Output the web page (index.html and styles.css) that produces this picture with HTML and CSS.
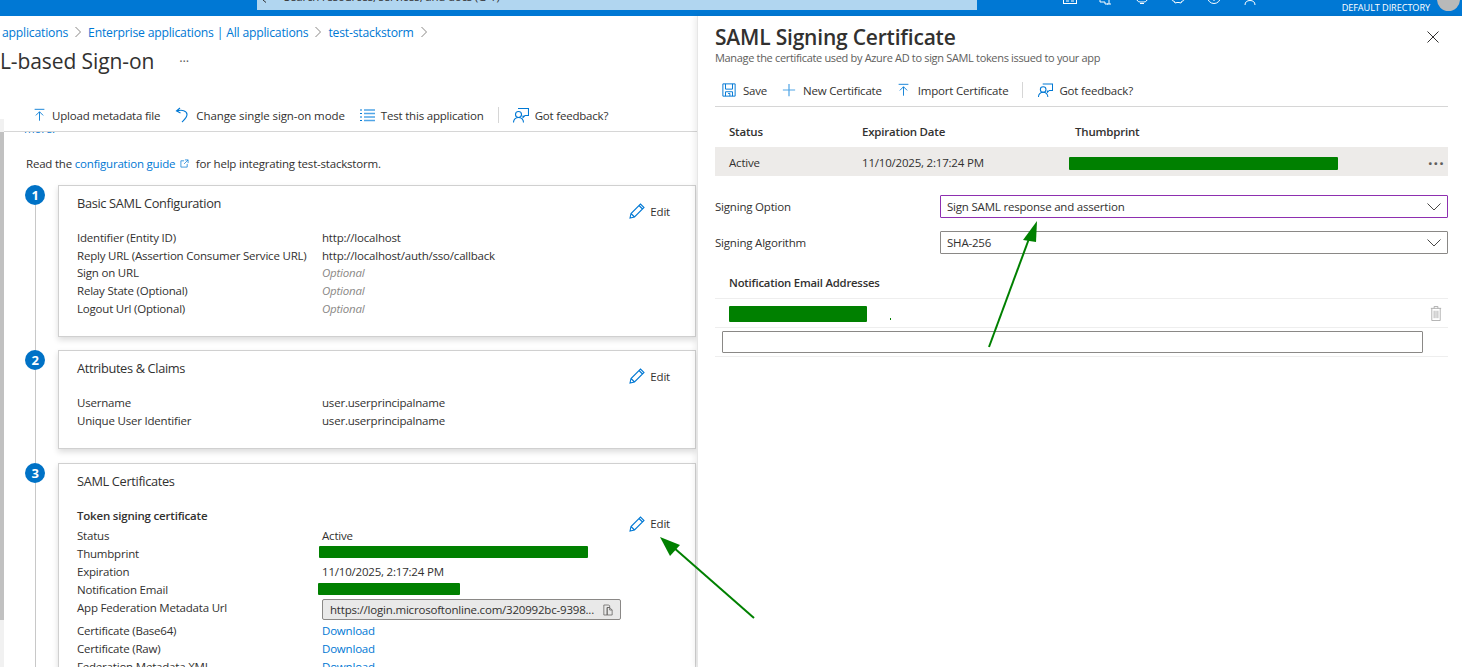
FILE: index.html
```html
<!DOCTYPE html>
<html lang="en">
<head>
    <meta charset="UTF-8">
    <meta name="viewport" content="width=device-width, initial-scale=1.0">
    <title>SAML-based Sign-on</title>

    <link rel="stylesheet" href="styles.css">
</head>
<body>

    <header class="topbar">
        <div class="search">
            <svg class="search-icon" viewBox="0 0 8 4"><path d="M0 0l3 2.500"/></svg>
            <span class="search-text">Search resources, services, and docs (G+/)</span>
        </div>
        <div class="top-icons">
            <svg class="top-icon" viewBox="0 0 14 14"><rect x="0.5" y="-8" width="13" height="11.5"/><path d="M3 1h3M8 1h3"/></svg>
            <svg class="top-icon" viewBox="0 0 14 14"><path d="M1 -3v5h5v2h3M10 -3v7M8 4h4"/></svg>
            <svg class="top-icon" viewBox="0 0 14 14"><path d="M2 0c1 2 2 2 5 2s4 0 5-2M5 3.500h4"/></svg>
            <svg class="top-icon" viewBox="0 0 14 14"><path d="M1 -1c0 2 1 2 2 2l1 2 2-.5h2l2 .5 1-2c1 0 2 0 2-2"/></svg>
            <svg class="top-icon" viewBox="0 0 14 14"><circle cx="7" cy="-3" r="6.500"/><path d="M7 -1v2"/></svg>
            <svg class="top-icon" viewBox="0 0 14 14"><path d="M2 5c0-3 2-4.500 5-4.500s5 1.500 5 4.500"/></svg>
        </div>
        <div class="directory">DEFAULT DIRECTORY</div>
        <div class="avatar"></div>
    </header>

    <main class="page">
        <section class="left">
            <nav class="crumbs">
                <a>applications</a><svg class="crumb-sep" viewBox="0 0 8 12"><path d="M1.500 1l5 5-5 5"/></svg>
                <a>Enterprise applications | All applications</a><svg class="crumb-sep" viewBox="0 0 8 12"><path d="M1.500 1l5 5-5 5"/></svg>
                <a>test-stackstorm</a><svg class="crumb-sep" viewBox="0 0 8 12"><path d="M1.500 1l5 5-5 5"/></svg>
            </nav>
            <div class="page-title">
                <h1>L-based Sign-on</h1>
                <span class="title-more">···</span>
            </div>

            <div class="toolbar left-toolbar">
                <span class="tool">
                    <svg class="icon icon-13" viewBox="0 0 16 16"><path d="M2 1h12M8 15V4M3.500 8.500L8 4l4.500 4.500"/></svg>
                    Upload metadata file
                </span>
                <span class="tool tool-wide">
                    <svg class="icon icon-14" viewBox="0 0 14 16"><path d="M5 1L1.500 4 5.500 6M2 4c4.500-1.500 10-.5 10 3.500 0 3-2.500 5-5 7.500"/></svg>
                    Change single sign-on mode
                </span>
                <span class="tool">
                    <svg class="icon icon-16" viewBox="0 0 16 14"><path d="M5 2h11M5 5.500h11M5 9h11M5 12.500h11" class="light"/><path d="M1 2h2M1 5.500h2M1 9h2M1 12.500h2"/></svg>
                    Test this application
                </span>
                <span class="tool-sep"></span>
                <span class="tool">
                    <svg class="icon icon-16" viewBox="0 0 16 16"><path d="M5 1.500h10.500v7H12l-2 2v-2"/><circle cx="5.500" cy="7.500" r="3"/><path d="M.5 15.500c0-3 2-5 5-5s5 2 5 5"/></svg>
                    Got feedback?
                </span>
            </div>

            <div class="scroll-area">
                <div class="scrollbar"><div class="scroll-thumb"></div></div>
                <div class="content">
                    <a class="more">more.</a>
                    <p class="guide">Read the <a>configuration guide</a>
                        <svg class="ext" viewBox="0 0 10 10"><path d="M8 5.500V9H1V2h3.500M5.500 1H9v3.500M9 1L4.500 5.500"/></svg>
                        for help integrating test-stackstorm.</p>

                    <div class="step step-first">
                        <div class="marker"><span class="num">1</span><span class="rail"></span></div>
                        <div class="card card-basic">
                            <div class="card-head">
                                <h2>Basic SAML Configuration</h2>
                                <span class="edit"><svg class="icon" viewBox="0 0 16 16"><path d="M1 15l1-4.500L11.500 1l3.500 3.500L5.500 14zM2 10.500L5.500 14M10 2.500L13.500 6"/></svg>Edit</span>
                            </div>
                            <dl class="rows">
                                <dt>Identifier (Entity ID)</dt><dd>http://localhost</dd>
                                <dt>Reply URL (Assertion Consumer Service URL)</dt><dd>http://localhost/auth/sso/callback</dd>
                                <dt>Sign on URL</dt><dd class="optional">Optional</dd>
                                <dt>Relay State (Optional)</dt><dd class="optional">Optional</dd>
                                <dt>Logout Url (Optional)</dt><dd class="optional">Optional</dd>
                            </dl>
                        </div>
                    </div>

                    <div class="step">
                        <div class="marker"><span class="num">2</span><span class="rail"></span></div>
                        <div class="card card-claims">
                            <div class="card-head">
                                <h2>Attributes &amp; Claims</h2>
                                <span class="edit"><svg class="icon" viewBox="0 0 16 16"><path d="M1 15l1-4.500L11.500 1l3.500 3.500L5.500 14zM2 10.500L5.500 14M10 2.500L13.500 6"/></svg>Edit</span>
                            </div>
                            <dl class="rows">
                                <dt>Username</dt><dd>user.userprincipalname</dd>
                                <dt>Unique User Identifier</dt><dd>user.userprincipalname</dd>
                            </dl>
                        </div>
                    </div>

                    <div class="step">
                        <div class="marker"><span class="num">3</span><span class="rail"></span></div>
                        <div class="card">
                            <div class="card-head">
                                <h2>SAML Certificates</h2>
                            </div>
                            <div class="cert-head">
                                <strong>Token signing certificate</strong>
                                <span class="edit"><svg class="icon" viewBox="0 0 16 16"><path d="M1 15l1-4.500L11.500 1l3.500 3.500L5.500 14zM2 10.500L5.500 14M10 2.500L13.500 6"/></svg>Edit</span>
                            </div>
                            <dl class="rows">
                                <dt>Status</dt><dd>Active</dd>
                                <dt>Thumbprint</dt><dd><span class="redact redact-thumb"></span></dd>
                                <dt>Expiration</dt><dd>11/10/2025, 2:17:24 PM</dd>
                                <dt>Notification Email</dt><dd><span class="redact redact-mail"></span></dd>
                                <dt>App Federation Metadata Url</dt>
                                <dd class="url-cell">
                                    <span class="url-box">
                                        <span class="url-text">https://login.microsoftonline.com/320992bc-9398...</span>
                                        <svg class="copy" viewBox="0 0 12 14"><path d="M1 1h6l1 1v2H5v9H1zM5 4h3l3 3v6H5zM8 4v3h3"/></svg>
                                    </span>
                                </dd>
                                <dt>Certificate (Base64)</dt><dd><a>Download</a></dd>
                                <dt>Certificate (Raw)</dt><dd><a>Download</a></dd>
                                <dt>Federation Metadata XML</dt><dd><a>Download</a></dd>
                            </dl>
                        </div>
                    </div>
                </div>
            </div>
        </section>

        <aside class="blade">
            <div class="blade-head">
                <div>
                    <h2 class="blade-title">SAML Signing Certificate</h2>
                    <p class="blade-sub">Manage the certificate used by Azure AD to sign SAML tokens issued to your app</p>
                </div>
                <svg class="close" viewBox="0 0 12 12"><path d="M.5.500l11 11M11.500.500l-11 11"/></svg>
            </div>

            <div class="toolbar blade-toolbar">
                <span class="tool tool-save">
                    <svg class="icon icon-14" viewBox="0 0 16 16"><path d="M1 1h14v14H1zM4 1v6h8V1M4 15v-5h8v5M7 12h2v3"/></svg>
                    Save
                </span>
                <span class="tool tool-plus">
                    <svg class="icon icon-14" viewBox="0 0 16 16"><path class="light" d="M8 1v14M1 8h14"/></svg>
                    New Certificate
                </span>
                <span class="tool tool-import">
                    <svg class="icon icon-13" viewBox="0 0 16 16"><path d="M2 1h12M8 15V4M3.500 8.500L8 4l4.500 4.500"/></svg>
                    Import Certificate
                </span>
                <span class="tool-sep"></span>
                <span class="tool">
                    <svg class="icon icon-15" viewBox="0 0 16 16"><path d="M5 1.500h10.500v7H12l-2 2v-2"/><circle cx="5.500" cy="7.500" r="3"/><path d="M.5 15.500c0-3 2-5 5-5s5 2 5 5"/></svg>
                    Got feedback?
                </span>
            </div>

            <div class="cert-table">
                <div class="cert-row cert-row-head">
                    <span>Status</span><span>Expiration Date</span><span>Thumbprint</span>
                </div>
                <div class="cert-row cert-row-active">
                    <span>Active</span><span>11/10/2025, 2:17:24 PM</span>
                    <span><span class="redact redact-blade"></span></span>
                    <span class="row-more">···</span>
                </div>
            </div>

            <div class="field field-first">
                <label>Signing Option</label>
                <div class="select select-focus">Sign SAML response and assertion
                    <svg class="chevron" viewBox="0 0 14 8"><path d="M.5.500L7 7l6.500-6.500"/></svg>
                </div>
            </div>
            <div class="field">
                <label>Signing Algorithm</label>
                <div class="select">SHA-256
                    <svg class="chevron" viewBox="0 0 14 8"><path d="M.5.500L7 7l6.500-6.500"/></svg>
                </div>
            </div>

            <h3 class="mail-head">Notification Email Addresses</h3>
            <div class="mail-row">
                <span class="redact redact-addr"></span>
                <span class="mail-dot"></span>
                <svg class="trash" viewBox="0 0 12 16"><path d="M.5 2.500h11M4 2.500V.500h4v2M1.500 2.500V15.500h9V2.500M4 5v8M6 5v8M8 5v8"/></svg>
            </div>
            <div class="mail-input-row"><div class="mail-input"></div></div>
        </aside>
    </main>

    <!-- annotation arrows drawn on top of the screenshot -->
    <svg class="arrows" viewBox="0 0 1462 667">
        <path d="M754 618L673 547"/>
        <polygon points="660,537 680,545 670,556"/>
        <path d="M989 347L1030 236"/>
        <polygon points="1037,221 1023,240 1036,242"/>
    </svg>

</body>
</html>
```

FILE: styles.css
```css
* {
    box-sizing: border-box;
}

body {
    margin: 0;
    height: 100vh;
    display: flex;
    flex-direction: column;
    overflow: hidden;
    font-family: "Open Sans", "Noto Sans", sans-serif;
    font-size: 11.5px;
    letter-spacing: -0.2px;
    color: #323130;
    background-color: #fff;
}

h1, h2, h3, p, dl, dd {
    margin: 0;
}

a {
    color: #0078d4;
}

/* top bar */
.topbar {
    flex: none;
    height: 16px;
    display: flex;
    padding-left: 257px;
    background-color: #0078d4;
    overflow: hidden;
}

.search {
    width: 720px;
    height: 10px;
    padding-left: 6px;
    display: flex;
    gap: 13px;
    background-color: #b1d6f0;
    overflow: hidden;
}

.search-icon {
    width: 8px;
    height: 4px;
    fill: none;
    stroke: #323130;
}

.search-text {
    display: block;
    margin-top: -3px;
    line-height: 0;
    white-space: nowrap;
    color: #323130;
}

.top-icons {
    display: flex;
    gap: 22px;
    margin-left: 86px;
}

.top-icon {
    width: 14px;
    height: 14px;
    overflow: visible;
    fill: none;
    stroke: #fff;
    stroke-width: 1;
}

.directory {
    margin-left: auto;
    font-size: 9.2px;
    line-height: 15px;
    letter-spacing: -0.1px;
    color: #fff;
}

.avatar {
    width: 23px;
    height: 23px;
    margin: -12px 2px 0 7px;
    border-radius: 50%;
    background-color: #b9b9b9;
}

/* page */
.page {
    flex: 1;
    display: flex;
    min-height: 0;
}

.left {
    width: 697px;
    flex: none;
    display: flex;
    flex-direction: column;
    overflow: hidden;
}

.crumbs {
    height: 20px;
    margin-top: 6px;
    padding-left: 2px;
    display: flex;
    align-items: center;
    font-size: 12.2px;
    white-space: nowrap;
}

.crumb-sep {
    width: 8px;
    height: 12px;
    margin: 0 6px;
    fill: none;
    stroke: #8a8886;
}

.page-title {
    height: 30px;
    margin-top: 4px;
    display: flex;
    align-items: center;
}

.page-title h1 {
    font-size: 21px;
    font-weight: 400;
    letter-spacing: -0.1px;
}

.title-more {
    margin-left: 25px;
    font-size: 13px;
    color: #605e5c;
}

.toolbar {
    display: flex;
    align-items: center;
    border-bottom: 1px solid #d6d6d6;
}

.left-toolbar {
    height: 32px;
    margin-top: 24px;
    padding-left: 33px;
    padding-bottom: 1px;
}

.tool {
    display: flex;
    align-items: center;
    gap: 6px;
    margin-right: 15px;
    white-space: nowrap;
}

.tool-wide {
    gap: 7px;
    margin-right: 14px;
    letter-spacing: -0.09px;
}

.tool-sep {
    width: 1px;
    height: 16px;
    margin: 0 14px 0 -1px;
    background-color: #d6d6d6;
}

.icon {
    width: 16px;
    height: 16px;
    flex: none;
    fill: none;
    stroke: #0078d4;
    stroke-width: 1.1;
}

.icon .light {
    stroke: #50a5e6;
    stroke-width: 1.4;
}

.icon-13 {
    width: 13px;
}

.icon-14 {
    width: 14px;
}

.icon-15 {
    width: 15px;
}

/* scrolling part of the left side */
.scroll-area {
    flex: 1;
    min-height: 0;
    display: flex;
}

.scrollbar {
    width: 4px;
    flex: none;
    margin-top: -13px;
    padding-top: 13px;
    background-color: #f1f1f1;
}

.scroll-thumb {
    height: 488px;
    background-color: #c1c1c1;
}

.content {
    flex: 1;
    padding-left: 21px;
    overflow: hidden;
}

.more {
    display: block;
    height: 3px;
    line-height: 0;
    margin: -3px 0 0 -1px;
}

.guide {
    margin: 23px 0 12px 1px;
    line-height: 18px;
    white-space: nowrap;
}

.ext {
    width: 9px;
    height: 9px;
    margin: 0 4px 0 2px;
    fill: none;
    stroke: #0078d4;
    stroke-width: 0.8;
}

.step {
    display: flex;
    gap: 13px;
    padding-bottom: 14px;
}

.step-first {
    padding-bottom: 13px;
}

.marker {
    width: 20px;
    flex: none;
    display: flex;
    flex-direction: column;
    align-items: center;
}

.num {
    width: 20px;
    height: 20px;
    flex: none;
    border-radius: 50%;
    background-color: #0072c6;
    color: #fff;
    font-size: 13px;
    font-weight: 700;
    line-height: 20px;
    text-align: center;
}

.rail {
    flex: 1;
    width: 1px;
    margin-bottom: -14px;
    background-color: #c8c8c8;
}

.card {
    flex: 1;
    margin-right: 1px;
    border: 1px solid #d0d0d0;
    padding: 0 25px 0 18px;
    background-color: #fff;
    box-shadow: 0 3px 6px rgba(0, 0, 0, 0.14);
}

.card-basic {
    height: 152px;
}

.card-claims {
    height: 99px;
}

.card-head {
    height: 43px;
    padding-top: 7px;
    display: flex;
    justify-content: space-between;
    align-items: flex-start;
}

.card-head h2 {
    font-size: 12.8px;
    font-weight: 400;
    line-height: 20px;
    letter-spacing: -0.35px;
}

.edit {
    display: flex;
    align-items: center;
    gap: 5px;
    height: 18px;
    margin-top: 9px;
}

.cert-head {
    height: 20px;
    display: flex;
    justify-content: space-between;
    align-items: flex-start;
    line-height: 18px;
}

.cert-head strong {
    font-weight: 600;
}

.cert-head .edit {
    margin-top: 8px;
}

.rows {
    display: grid;
    grid-template-columns: 245px 1fr;
    grid-auto-rows: 18px;
    line-height: 18px;
}

.card-basic .rows {
    grid-auto-rows: 17.7px;
}

.rows dt, .rows dd {
    white-space: nowrap;
}

.optional {
    font-style: italic;
    color: #8a8886;
}

.redact {
    display: inline-block;
    border-radius: 1px;
    background-color: #008000;
    vertical-align: top;
}

.redact-thumb {
    width: 269px;
    height: 12px;
    margin: 1px 0 0 -3px;
}

.redact-mail {
    width: 142px;
    height: 12px;
    margin: 2px 0 0 -4px;
}

.url-cell {
    height: 23px;
}

.url-box {
    display: flex;
    align-items: center;
    justify-content: space-between;
    width: 299px;
    height: 21px;
    padding: 0 7px;
    border: 1px solid #8a8886;
    border-radius: 2px;
    background-color: #e9e9e9;
}

.rows:has(.url-box) {
    grid-template-rows: 18px 18px 18px 18px 23px;
}

.copy {
    width: 10px;
    height: 12px;
    fill: none;
    stroke: #605e5c;
    stroke-width: 0.9;
}

/* right blade */
.blade {
    flex: 1;
    padding: 7px 14px 0 17px;
    border-left: 1px solid #e6e6e6;
    box-shadow: -2px 0 6px rgba(0, 0, 0, 0.08);
    background-color: #fff;
}

.blade-head {
    display: flex;
    justify-content: space-between;
    align-items: flex-start;
}

.blade-title {
    font-size: 21px;
    font-weight: 600;
    line-height: 28px;
    letter-spacing: -0.2px;
}

.blade-sub {
    margin-top: -1px;
    font-size: 11px;
    line-height: 16px;
    letter-spacing: -0.33px;
    color: #605e5c;
}

.close {
    width: 12px;
    height: 12px;
    margin: 8px 9px 0 0;
    fill: none;
    stroke: #323130;
}

.blade-toolbar {
    height: 31px;
    margin-top: 10px;
    padding-left: 7px;
    padding-bottom: 2px;
}

.tool-save {
    gap: 7px;
}

.tool-plus {
    gap: 7px;
}

.tool-import {
    gap: 8px;
}

.blade-toolbar .tool-sep {
    margin: 0 15px 0 -1px;
}

.cert-table {
    margin-top: 11px;
}

.cert-row {
    display: grid;
    grid-template-columns: 133px 213px 1fr 20px;
    align-items: center;
    padding-left: 14px;
    height: 29px;
}

.cert-row-head {
    padding-bottom: 2px;
    font-weight: 600;
}

.cert-row-active {
    padding-top: 2px;
    background-color: #edebe9;
}

.redact-blade {
    width: 269px;
    height: 13px;
    margin: 2px 0 0 -6px;
}

.row-more {
    font-size: 16px;
    font-weight: 700;
    line-height: 14px;
    letter-spacing: 1px;
    color: #605e5c;
}

.field {
    display: flex;
    align-items: center;
    margin-top: 13px;
}

.field-first {
    margin-top: 19px;
}

.field label {
    width: 225px;
    flex: none;
}

.select {
    flex: 1;
    height: 23px;
    padding: 0 6px;
    display: flex;
    align-items: center;
    justify-content: space-between;
    border: 1px solid #8a8886;
    border-radius: 1px;
}

.select.select-focus {
    border: 1px solid #8e2fb0;
}

.chevron {
    width: 14px;
    height: 8px;
    fill: none;
    stroke: #323130;
    stroke-width: 0.9;
}

.mail-head {
    height: 25px;
    margin-top: 20px;
    padding-left: 14px;
    font-size: 11.3px;
    font-weight: 600;
    line-height: 18px;
    border-bottom: 1px solid #eeeeee;
}

.mail-row {
    height: 29px;
    padding-left: 14px;
    display: flex;
    align-items: center;
    border-bottom: 1px solid #eeeeee;
}

.redact-addr {
    width: 138px;
    height: 16px;
    margin-top: 2px;
}

.mail-dot {
    width: 1px;
    height: 2px;
    margin: 12px 0 0 23px;
    background-color: #008000;
}

.trash {
    width: 12px;
    height: 15px;
    margin: 0 6px 0 auto;
    fill: none;
    stroke: #a6a6a6;
    stroke-width: 0.9;
}

.mail-input-row {
    height: 29px;
    padding: 3px 25px 0 7px;
    border-bottom: 1px solid #eeeeee;
}

.mail-input {
    height: 22px;
    border: 1px solid #8a8886;
    border-radius: 1px;
}

/* annotation arrows */
.arrows {
    position: absolute;
    top: 0;
    left: 0;
    width: 1462px;
    height: 667px;
    pointer-events: none;
}

.arrows path {
    fill: none;
    stroke: #008000;
    stroke-width: 2;
}

.arrows polygon {
    fill: #008000;
}
```
